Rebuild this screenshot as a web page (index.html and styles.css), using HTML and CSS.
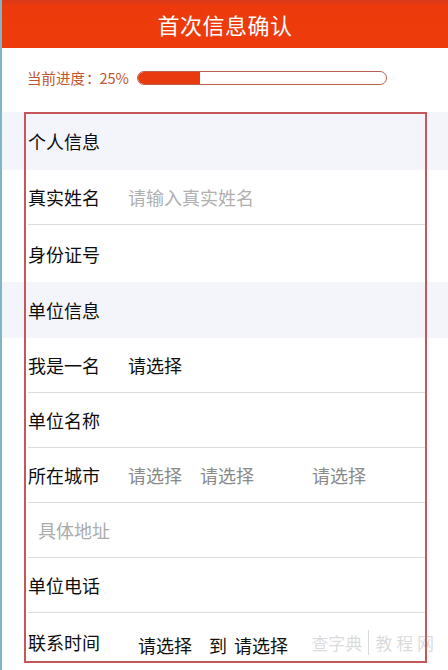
FILE: index.html
```html
<!DOCTYPE html>
<html lang="zh-CN">
<head>
<meta charset="utf-8">
<title>首次信息确认</title>
<link rel="stylesheet" href="styles.css">
</head>
<body>
<div class="page">
  <header class="topbar">首次信息确认</header>
  <div class="progress">
    <span class="progress-label">当前进度<span class="colon">：</span>25%</span>
    <div class="bar"><div class="bar-fill" style="width:25%"></div></div>
  </div>
  <div class="form">
    <div class="row section h58"><div class="cell"><span class="label">个人信息</span></div></div>
    <div class="row h55"><div class="cell line"><span class="label">真实姓名</span><span class="ph">请输入真实姓名</span></div></div>
    <div class="row h57"><div class="cell"><span class="label">身份证号</span></div></div>
    <div class="row section h56"><div class="cell"><span class="label">单位信息</span></div></div>
    <div class="row h55"><div class="cell line"><span class="label">我是一名</span><span class="val">请选择</span></div></div>
    <div class="row h55"><div class="cell line"><span class="label">单位名称</span></div></div>
    <div class="row h55"><div class="cell line"><span class="label">所在城市</span><span class="sel s1">请选择</span><span class="sel s2">请选择</span><span class="sel s3">请选择</span></div></div>
    <div class="row h55"><div class="cell line"><span class="addr">具体地址</span></div></div>
    <div class="row h55"><div class="cell line"><span class="label">单位电话</span></div></div>
    <div class="row h57"><div class="cell"><span class="label">联系时间</span><span class="time"><span class="val">请选择</span><span class="to">到</span><span class="val">请选择</span></span></div></div>
    <div class="annot"></div>
    <div class="watermark"><span class="wm1">查字典</span><span class="wm2">教 程 网</span></div>
  </div>
</div>
</body>
</html>
```
FILE: styles.css
```css
* { box-sizing: border-box; }
html, body { margin: 0; padding: 0; }
body {
  width: 448px;
  height: 670px;
  overflow: hidden;
  background: #fff;
  font-family: "Noto Sans CJK SC", "Noto Sans", sans-serif;
  color: #1a1a1a;
}
.page {
  border-left: 2px solid #7fb6c6;
  min-height: 670px;
}
.topbar {
  height: 48px;
  background: linear-gradient(#d9391a 0, #ec3a0c 6px, #ee3b0b 100%);
  color: #fff;
  font-size: 22px;
  line-height: 48px;
  text-align: center;
  letter-spacing: 0.5px;
}
.progress {
  height: 64px;
  display: flex;
  align-items: center;
  padding-left: 25px;
  padding-bottom: 5px;
}
.progress-label {
  flex: none;
  width: 110px;
  font-size: 14.5px;
  color: #c2542c;
  white-space: nowrap;
}
.colon { margin: 0 -1px 0 1px; }
.bar {
  width: 250px;
  height: 14px;
  border: 1.5px solid #b9604e;
  border-radius: 8px;
  overflow: hidden;
  background: #fff;
}
.bar-fill {
  height: 100%;
  background: #e83a0e;
}
.form {
  position: relative;
}
.row { display: flex; }
.row.section { background: #f3f5fa; }
.h55 { height: 55px; }
.h56 { height: 56px; }
.h57 { height: 57px; }
.h58 { height: 58px; }
.cell {
  flex: 1;
  margin: 0 22px 0 26px;
  display: flex;
  align-items: center;
  font-size: 18px;
}
.cell.line { border-bottom: 1px solid #dcdcdc; }
.label {
  width: 100px;
  flex: none;
  color: #0d0d0d;
}
.ph { color: #b0b0b0; }
.val { color: #111; }
.sel { color: #8a8a8a; }
.s2 { margin-left: 18px; }
.s3 { margin-left: 58px; }
.addr {
  color: #ababab;
  margin-left: 10px;
}
.time {
  display: flex;
  margin-left: 10px;
  margin-top: 6px;
}
.to { margin: 0 7px 0 17px; color: #111; }
.annot {
  position: absolute;
  left: 22px;
  top: 0;
  width: 403px;
  height: 551px;
  border: 2px solid #c5575a;
  pointer-events: none;
}
.watermark {
  position: absolute;
  right: 14px;
  top: 518px;
  display: flex;
  align-items: center;
  gap: 6px;
  font-size: 17px;
  color: rgba(150, 150, 150, 0.35);
  pointer-events: none;
}
.wm2 {
  border-left: 1px solid rgba(150,150,150,0.35);
  padding-left: 6px;
}
```
